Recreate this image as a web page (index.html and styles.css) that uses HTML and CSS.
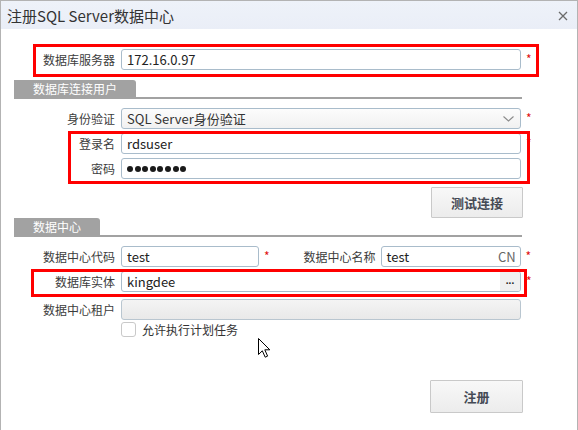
FILE: index.html
```html
<!DOCTYPE html>
<html lang="zh-CN">
<head>
<meta charset="utf-8">
<title>注册SQL Server数据中心</title>
<link rel="stylesheet" href="styles.css">
</head>
<body>
<div class="window">
  <div class="titlebar">
    <span class="title">注册SQL Server数据中心</span>
    <svg class="close" width="10" height="10" viewBox="0 0 10 10"><path d="M1 1 L9 9 M9 1 L1 9" stroke="#6b6b6b" stroke-width="1.3" fill="none"/></svg>
  </div>
  <div class="content">
    <div class="row r-server">
      <label class="label">数据库服务器</label>
      <div class="field wide"><span class="val">172.16.0.97</span></div>
      <span class="req">*</span>
    </div>

    <div class="section s-user"><span class="tab">数据库连接用户</span></div>

    <div class="row r-auth">
      <label class="label">身份验证</label>
      <div class="field wide select"><span class="val">SQL Server身份验证</span>
        <svg class="chev" width="11" height="6" viewBox="0 0 11 6"><path d="M0.5 0.5 L5.5 5 L10.5 0.5" stroke="#8a8a8a" stroke-width="1.1" fill="none"/></svg>
      </div>
      <span class="req">*</span>
    </div>
    <div class="row r-login">
      <label class="label">登录名</label>
      <div class="field wide"><span class="val">rdsuser</span></div>
      <span class="req">*</span>
    </div>
    <div class="row r-pwd">
      <label class="label">密码</label>
      <div class="field wide"><span class="dots"><i></i><i></i><i></i><i></i><i></i><i></i><i></i><i></i></span></div>
    </div>
    <div class="btnrow r-test"><button class="btn test">测试连接</button></div>

    <div class="section s-dc"><span class="tab">数据中心</span></div>

    <div class="row r-code">
      <label class="label">数据中心代码</label>
      <div class="field code"><span class="val">test</span></div>
      <span class="req">*</span>
      <label class="label2">数据中心名称</label>
      <div class="field name"><span class="val">test</span><span class="cn">CN</span></div>
      <span class="req">*</span>
    </div>
    <div class="row r-entity">
      <label class="label">数据库实体</label>
      <div class="field wide"><span class="val">kingdee</span><span class="more">...</span></div>
      <span class="req">*</span>
    </div>
    <div class="row r-tenant">
      <label class="label">数据中心租户</label>
      <div class="field wide disabled"></div>
    </div>
    <div class="checkrow">
      <span class="box"></span><span class="cklabel">允许执行计划任务</span>
    </div>
    <div class="btnrow r-reg"><button class="btn reg">注册</button></div>
  </div>

  <div class="mark m1"></div>
  <div class="mark m2"></div>
  <div class="mark m3"></div>
  <svg class="cursor" width="13" height="20" viewBox="0 0 13 20"><path d="M0.5 0.5 L0.5 16.5 L4.3 12.8 L7.2 19.2 L9.6 18.1 L6.8 11.8 L11.8 11.8 Z" fill="#fff" stroke="#000" stroke-width="1" stroke-linejoin="miter"/></svg>
</div>
</body>
</html>
```
FILE: styles.css
```css
* { box-sizing: border-box; }
html, body { margin: 0; padding: 0; background: #fff; }
body {
  font-family: "Noto Sans CJK SC", "Noto Sans", sans-serif;
  font-size: 12px;
  color: #333;
}
.window {
  position: relative;
  width: 578px;
  height: 430px;
  border-left: 1px solid #b3b3b3;
  border-right: 1px solid #b3b3b3;
  border-top: 1px solid #b3b3b3;
  background: #fff;
  overflow: hidden;
}
.titlebar {
  height: 28px;
  background: linear-gradient(#eef2f9, #eaeef7);
  display: flex;
  align-items: center;
  justify-content: space-between;
  padding: 0 9px 0 6px;
}
.title { font-size: 15px; line-height: 20px; color: #333; margin-top: 1px; }
.close { display: block; margin-top: 1px; }

.content { padding-top: 20px; }
.row { display: flex; align-items: center; height: 21px; }
.label {
  width: 114px;
  margin-right: 6px;
  text-align: right;
  line-height: 16px;
  color: #3c3c3c;
  flex: none;
}
.field {
  position: relative;
  height: 21px;
  border: 1px solid #a9bccb;
  border-radius: 3px;
  background: #fff;
  display: flex;
  align-items: center;
  padding-left: 5px;
  flex: none;
}
.field.wide { width: 400px; }
.field.code { width: 138px; }
.field.name { width: 140px; }
.val { font-size: 13px; line-height: 16px; color: #222; }
.select { background: linear-gradient(#fcfcfc, #f1f1f1); }
.select .val { color: #333; }
.chev { position: absolute; right: 6px; top: 7px; }
.cn { position: absolute; right: 4px; top: 1px; font-size: 13px; line-height: 17px; color: #666; }
.more {
  position: absolute; right: 0; top: 0; bottom: 0; width: 20px;
  background: #f0f0f0; border-radius: 0 2px 2px 0;
  font-family: "Liberation Sans", sans-serif;
  font-size: 10px; line-height: 17px; text-align: center; color: #222; font-weight: bold; letter-spacing: 0;
}
.disabled { background: linear-gradient(#f4f4f4, #e9e9e9); border-color: #b9c6d0; }
.req { color: #e01010; font-size: 12px; line-height: 12px; margin-left: 5px; align-self: flex-start; margin-top: 4px; }
.label2 { width: 72px; margin-left: 34px; margin-right: 5px; text-align: right; color: #3c3c3c; line-height: 16px; flex: none; }

.dots { display: flex; gap: 1.6px; }
.dots i { display: block; width: 6px; height: 6px; border-radius: 50%; background: #1a1a1a; }

.section {
  margin-left: 13px;
  width: 508px;
  border-bottom: 2px solid #a2a2a2;
  height: 19px;
  display: flex;
  align-items: flex-end;
}
.tab {
  display: block;
  height: 17px;
  background: #a2a2a2;
  color: #fff;
  padding: 0 19px;
  line-height: 17px;
  font-size: 12px;
  border-radius: 0 3px 0 0;
}
.r-server { margin-top: 0; }
.s-user { margin-top: 10px; }
.r-auth { margin-top: 9px; }
.r-login { margin-top: 4px; }
.r-pwd { margin-top: 4px; }
.btnrow { width: 522px; display: flex; justify-content: flex-end; }
.r-test { margin-top: 8px; }
.s-dc { margin-top: 0; }
.r-code { margin-top: 9px; }
.r-entity { margin-top: 4px; }
.r-tenant { margin-top: 7px; }
.checkrow { display: flex; align-items: center; margin-top: 2px; padding-left: 120px; height: 15px; }
.box { width: 15px; height: 15px; border: 1px solid #c9c9c9; border-radius: 3px; background: #fff; flex: none; }
.cklabel { margin-left: 6px; line-height: 16px; color: #333; }
.r-reg { margin-top: 43px; }

.btn {
  font-family: "Noto Sans CJK SC", sans-serif;
  font-size: 13px;
  font-weight: bold;
  color: #454a55;
  background: linear-gradient(#f8f8f8, #ececec);
  border: 1px solid #c9c9c9;
  border-radius: 1px;
  padding: 0;
  line-height: 16px;
}
.btn.test { width: 92px; height: 31px; }
.btn.reg { width: 93px; height: 33px; }

.mark { position: absolute; border: 3px solid #ff0000; }
.m1 { left: 32px; top: 43px; width: 506px; height: 33px; }
.m2 { left: 67px; top: 130px; width: 462px; height: 53px; }
.m3 { left: 30px; top: 268px; width: 496px; height: 28px; }
.cursor { position: absolute; left: 257px; top: 337px; }
```
